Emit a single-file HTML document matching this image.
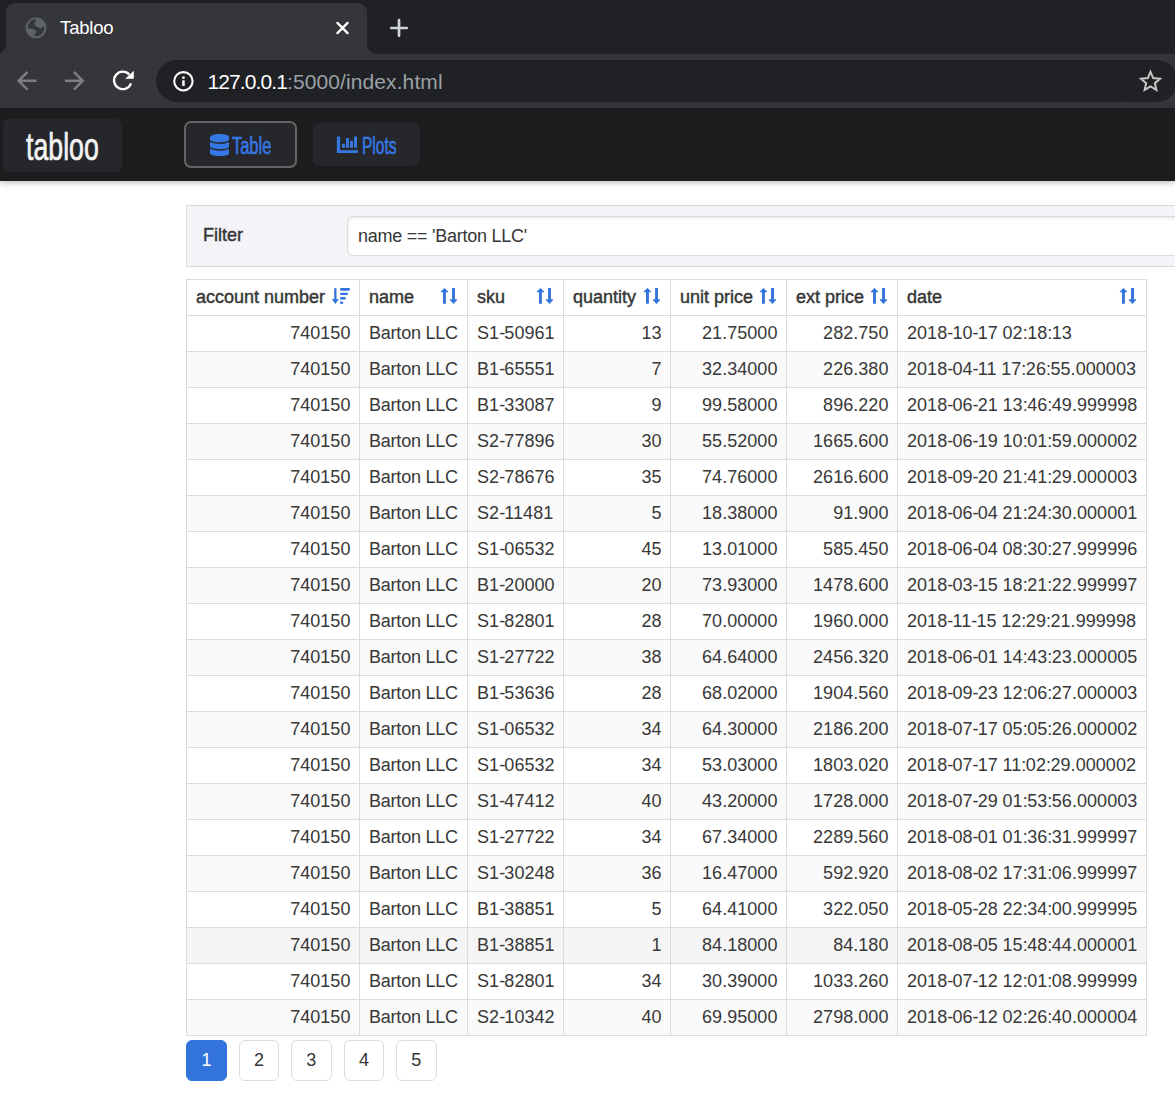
<!DOCTYPE html>
<html><head><meta charset="utf-8"><style>
*{margin:0;padding:0;box-sizing:border-box}
html,body{width:1175px;height:1100px;overflow:hidden;background:#fff;font-family:"Liberation Sans",sans-serif;position:relative}
.abs{position:absolute}
#tabstrip{left:0;top:0;width:1175px;height:54px;background:#202124}
#tab{left:6px;top:3px;width:361px;height:51px;background:#35363a;border-radius:9px 9px 0 0}
.flare{position:absolute;top:44px;width:10px;height:10px;background:#35363a}
.flare i{position:absolute;left:0;top:0;width:10px;height:10px;background:#202124}
#tabtitle{left:60.1px;top:16.5px;font-size:18.5px;letter-spacing:-0.2px;color:#fff;line-height:22px;white-space:nowrap}
#toolbar{left:0;top:54px;width:1175px;height:54px;background:#35363a}
#omni{left:156px;top:60px;width:1022px;height:41.5px;background:#202124;border-radius:21px}
#url{left:207.5px;top:70px;font-size:21px;line-height:24px;color:#fff;white-space:nowrap}
#url span{color:#9aa0a6}
#navbar{left:0;top:108px;width:1175px;height:73px;background:#1c1d1f;box-shadow:0 2px 6px rgba(0,0,0,.25)}
#logo{left:3px;top:119px;width:119px;height:53px;background:#25272b;border-radius:6px}
#logotxt{left:26px;top:125px;color:#f4f4f4;-webkit-text-stroke:0.7px #f4f4f4;font-size:39px;transform-origin:0 0;transform:scaleX(0.685);white-space:nowrap;line-height:44px}
#btn1{left:184.2px;top:121.1px;width:112.4px;height:46.5px;background:#25272b;border:2px solid #646464;border-radius:7px}
#btn2{left:313px;top:122.5px;width:107px;height:43.5px;background:#25272b;border-radius:7px}
.bt{color:#3578e5;-webkit-text-stroke:0.6px #3578e5;font-size:23px;line-height:28px;transform-origin:0 0;white-space:nowrap}
#filter{left:186px;top:205px;width:1000px;height:62px;background:#f4f3f8;border:1px solid #d9d9d9}
#flabel{left:203px;top:225px;font-size:18px;line-height:20px;color:#363636;-webkit-text-stroke:0.45px #363636}
#input{left:347px;top:216px;width:840px;height:40px;background:#fff;border:1px solid #dbdbdb;border-radius:6px;box-shadow:inset 0 1.25px 2.5px rgba(10,10,10,.1)}
#itext{left:358px;top:226px;font-size:18px;letter-spacing:-0.25px;line-height:20px;color:#363636}
table{position:absolute;left:186px;top:279px;border-collapse:collapse;table-layout:fixed;width:961px;font-size:18px;color:#383838}
td,th{border:1px solid #dbdbdb;height:36px;padding:0 8.5px 0 9px;white-space:nowrap;overflow:hidden;text-align:left;vertical-align:middle}
th{font-weight:normal;position:relative;-webkit-text-stroke:0.45px #363636}
td.r{text-align:right}
td{letter-spacing:0.05px}
td.nm{letter-spacing:-0.22px}
i{font-style:normal}
i.hy{letter-spacing:-0.8px}
i.co{letter-spacing:-0.5px}
i.sp{letter-spacing:-0.4px}
tr.e td{background:#fafafa}
tr.h td{background:#f5f5f5}
.si{position:absolute;right:9px;top:7.3px}
.si2{position:absolute;right:8px;top:7.3px}
.pg{position:absolute;top:1040px;width:40px;height:41px;border:1px solid #dbdbdb;border-radius:6px;background:#fff;font-size:18px;color:#363636;text-align:center;line-height:39px}
</style></head><body>
<div id="tabstrip" class="abs"></div>
<div id="tab" class="abs"></div>
<div class="flare" style="left:-4px"><i style="border-bottom-right-radius:10px"></i></div>
<div class="flare" style="left:367px"><i style="border-bottom-left-radius:10px"></i></div>
<svg class="abs" style="left:24px;top:16px" width="24" height="24" viewBox="-2 -2 24 24">
<defs><clipPath id="gc"><circle cx="10" cy="9.8" r="9.5"/></clipPath></defs>
<circle cx="10" cy="9.8" r="9.5" fill="none" stroke="#5f6368" stroke-width="2"/>
<g clip-path="url(#gc)" fill="#5f6368">
<path d="M10.8 0 C10.8 2 9.5 3 8.6 4.5 C7.8 6 8.5 7.8 10.5 8.6 C12 9.3 13.3 10.3 14.6 10.2 C16.3 10 17.5 8 20 7.2 L20 0 Z"/>
<path d="M0 10.3 C2 10.2 4.5 10.3 6.5 11 C8.5 11.7 10.2 12.5 10.3 13.8 C10.3 15 8.7 15.6 8.5 16.8 C8.4 18 9 19 9 20 L0 20 Z"/>
</g>
</svg>
<div id="tabtitle" class="abs">Tabloo</div>
<svg class="abs" style="left:334.6px;top:21px" width="15" height="14" viewBox="0 0 15 14"><path d="M2.4 1.9 L12.6 12.1 M12.6 1.9 L2.4 12.1" stroke="#fff" stroke-width="2.3" stroke-linecap="round"/></svg>
<svg class="abs" style="left:389px;top:18px" width="20" height="20" viewBox="0 0 20 20"><path d="M10 2.2 V17.8 M2.2 10 H17.8" stroke="#d0d3d7" stroke-width="2.7" stroke-linecap="round"/></svg>
<div id="toolbar" class="abs"></div>
<svg class="abs" style="left:12.1px;top:65.6px" width="29.4" height="29.4" viewBox="0 0 24 24"><path d="M20 11H7.83l5.59-5.59L12 4l-8 8 8 8 1.41-1.41L7.83 13H20v-2z" fill="#7c7e82"/></svg>
<svg class="abs" style="left:60.1px;top:65.6px" width="29.4" height="29.4" viewBox="0 0 24 24"><path d="M12 4l-1.41 1.41L16.17 11H4v2h12.17l-5.58 5.59L12 20l8-8z" fill="#7c7e82"/></svg>
<svg class="abs" style="left:111px;top:68px" width="26" height="25" viewBox="0 0 26 25"><path d="M20.02 15.39 A8.75 8.75 0 1 1 18.30 6.55" stroke="#fff" stroke-width="2.3" fill="none"/><path d="M14.2 10.8 L22.8 10.8 L22.8 2.8 Z" fill="#fff"/></svg>
<div id="omni" class="abs"></div>
<svg class="abs" style="left:172px;top:70px" width="23" height="23" viewBox="0 0 23 23"><circle cx="11.4" cy="11.3" r="9.2" fill="none" stroke="#fff" stroke-width="2.1"/><rect x="10.2" y="6.5" width="2.5" height="2.3" fill="#fff"/><rect x="10.2" y="10.3" width="2.5" height="5.6" fill="#fff"/></svg>
<div class="abs" style="left:1123px;top:64px;width:1px;height:34px;background:#1e1f22"></div>
<div id="url" class="abs"><b style="font-weight:normal;letter-spacing:-0.9px">127.0.0.1</b><span style="letter-spacing:0.1px">:5000/index.html</span></div>
<svg class="abs" style="left:1138px;top:68.8px" width="25" height="25" viewBox="0 0 25 25"><path d="M12.50 2.80 L15.20 9.08 L22.01 9.71 L16.87 14.22 L18.38 20.89 L12.50 17.40 L6.62 20.89 L8.13 14.22 L2.99 9.71 L9.80 9.08 Z" fill="none" stroke="#c6c6c6" stroke-width="2" stroke-linejoin="miter" stroke-miterlimit="10"/></svg>
<div id="navbar" class="abs"></div>
<div id="logo" class="abs"></div>
<div id="logotxt" class="abs">tabloo</div>
<div id="btn1" class="abs"></div>
<svg class="abs" style="left:209.8px;top:133.8px" width="19.4" height="22.2" viewBox="0 0 448 512"><path fill="#3578e5" d="M448 73.143v45.714C448 159.143 347.667 192 224 192S0 159.143 0 118.857V73.143C0 32.857 100.333 0 224 0s224 32.857 224 73.143zM448 176v102.857C448 319.143 347.667 352 224 352S0 319.143 0 278.857V176c48.125 33.143 136.208 48.572 224 48.572S399.874 209.143 448 176zm0 160v102.857C448 479.143 347.667 512 224 512S0 479.143 0 438.857V336c48.125 33.143 136.208 48.572 224 48.572S399.874 369.143 448 336z"/></svg>
<div class="abs bt" style="left:231.5px;top:132px;transform:scaleX(0.715)">Table</div>
<div id="btn2" class="abs"></div>
<svg class="abs" style="left:336px;top:136px" width="22" height="18" viewBox="0 0 22 18">
<path d="M0.85 0.4 H4.13 V14.26 H22 V17.09 H0.85 Z" fill="#3578e5"/>
<rect x="6" y="7.7" width="2.95" height="4.17" rx="0.3" fill="#3578e5"/>
<rect x="10.02" y="1.9" width="2.95" height="9.97" rx="0.3" fill="#3578e5"/>
<rect x="14.04" y="4.72" width="2.95" height="7.15" rx="0.3" fill="#3578e5"/>
<rect x="18.06" y="0.4" width="2.95" height="11.47" rx="0.3" fill="#3578e5"/>
</svg>
<div class="abs bt" style="left:362px;top:132px;transform:scaleX(0.675)">Plots</div>
<div id="filter" class="abs"></div>
<div id="flabel" class="abs">Filter</div>
<div id="input" class="abs"></div>
<div id="itext" class="abs">name == 'Barton LLC'</div>
<table>
<colgroup><col style="width:173px"><col style="width:108px"><col style="width:96px"><col style="width:107px"><col style="width:116px"><col style="width:111px"><col style="width:249px"></colgroup>
<thead><tr><th>account number<svg class="si2" width="20" height="18" viewBox="0 0 20 18"><path d="M3.2 2.2 A1.15 1.15 0 0 1 5.5 2.2 L5.5 12.1 L7.8 12.1 L4.35 16.9 L0.9 12.1 L3.2 12.1 Z" fill="#3273dc"/><g fill="#3273dc"><rect x="9" y="1.1" width="10" height="2.7" rx="1.3"/><rect x="9" y="5.8" width="8" height="2.3" rx="1.1"/><rect x="9" y="10.1" width="5.8" height="2.5" rx="1.2"/><rect x="9" y="14.6" width="3.2" height="2.3" rx="1.1"/></g></svg></th><th>name<svg class="si" width="18" height="18" viewBox="0 0 18 18"><path d="M4.46 0.93 L8.04 4.6 L8.04 5.3 L5.89 5.3 L5.89 16.8 L3.03 16.8 L3.03 5.3 L0.85 5.3 L0.85 4.6 Z M12.09 1.05 L14.95 1.05 L14.95 12.25 L17.09 12.25 L17.09 12.95 L13.5 16.9 L9.85 12.95 L9.85 12.25 L12.09 12.25 Z" fill="#3273dc"/></svg></th><th>sku<svg class="si" width="18" height="18" viewBox="0 0 18 18"><path d="M4.46 0.93 L8.04 4.6 L8.04 5.3 L5.89 5.3 L5.89 16.8 L3.03 16.8 L3.03 5.3 L0.85 5.3 L0.85 4.6 Z M12.09 1.05 L14.95 1.05 L14.95 12.25 L17.09 12.25 L17.09 12.95 L13.5 16.9 L9.85 12.95 L9.85 12.25 L12.09 12.25 Z" fill="#3273dc"/></svg></th><th>quantity<svg class="si" width="18" height="18" viewBox="0 0 18 18"><path d="M4.46 0.93 L8.04 4.6 L8.04 5.3 L5.89 5.3 L5.89 16.8 L3.03 16.8 L3.03 5.3 L0.85 5.3 L0.85 4.6 Z M12.09 1.05 L14.95 1.05 L14.95 12.25 L17.09 12.25 L17.09 12.95 L13.5 16.9 L9.85 12.95 L9.85 12.25 L12.09 12.25 Z" fill="#3273dc"/></svg></th><th>unit price<svg class="si" width="18" height="18" viewBox="0 0 18 18"><path d="M4.46 0.93 L8.04 4.6 L8.04 5.3 L5.89 5.3 L5.89 16.8 L3.03 16.8 L3.03 5.3 L0.85 5.3 L0.85 4.6 Z M12.09 1.05 L14.95 1.05 L14.95 12.25 L17.09 12.25 L17.09 12.95 L13.5 16.9 L9.85 12.95 L9.85 12.25 L12.09 12.25 Z" fill="#3273dc"/></svg></th><th>ext price<svg class="si" width="18" height="18" viewBox="0 0 18 18"><path d="M4.46 0.93 L8.04 4.6 L8.04 5.3 L5.89 5.3 L5.89 16.8 L3.03 16.8 L3.03 5.3 L0.85 5.3 L0.85 4.6 Z M12.09 1.05 L14.95 1.05 L14.95 12.25 L17.09 12.25 L17.09 12.95 L13.5 16.9 L9.85 12.95 L9.85 12.25 L12.09 12.25 Z" fill="#3273dc"/></svg></th><th>date<svg class="si" width="18" height="18" viewBox="0 0 18 18"><path d="M4.46 0.93 L8.04 4.6 L8.04 5.3 L5.89 5.3 L5.89 16.8 L3.03 16.8 L3.03 5.3 L0.85 5.3 L0.85 4.6 Z M12.09 1.05 L14.95 1.05 L14.95 12.25 L17.09 12.25 L17.09 12.95 L13.5 16.9 L9.85 12.95 L9.85 12.25 L12.09 12.25 Z" fill="#3273dc"/></svg></th></tr></thead>
<tbody>
<tr><td class="r">740150</td><td class="nm">Barton LLC</td><td>S1<i class="hy">-</i>50961</td><td class="r">13</td><td class="r">21.75000</td><td class="r">282.750</td><td>2018<i class="hy">-</i>10<i class="hy">-</i>17<i class="sp"> </i>02<i class="co">:</i>18<i class="co">:</i>13</td></tr>
<tr class="e"><td class="r">740150</td><td class="nm">Barton LLC</td><td>B1<i class="hy">-</i>65551</td><td class="r">7</td><td class="r">32.34000</td><td class="r">226.380</td><td>2018<i class="hy">-</i>04<i class="hy">-</i>11<i class="sp"> </i>17<i class="co">:</i>26<i class="co">:</i>55.000003</td></tr>
<tr><td class="r">740150</td><td class="nm">Barton LLC</td><td>B1<i class="hy">-</i>33087</td><td class="r">9</td><td class="r">99.58000</td><td class="r">896.220</td><td>2018<i class="hy">-</i>06<i class="hy">-</i>21<i class="sp"> </i>13<i class="co">:</i>46<i class="co">:</i>49.999998</td></tr>
<tr class="e"><td class="r">740150</td><td class="nm">Barton LLC</td><td>S2<i class="hy">-</i>77896</td><td class="r">30</td><td class="r">55.52000</td><td class="r">1665.600</td><td>2018<i class="hy">-</i>06<i class="hy">-</i>19<i class="sp"> </i>10<i class="co">:</i>01<i class="co">:</i>59.000002</td></tr>
<tr><td class="r">740150</td><td class="nm">Barton LLC</td><td>S2<i class="hy">-</i>78676</td><td class="r">35</td><td class="r">74.76000</td><td class="r">2616.600</td><td>2018<i class="hy">-</i>09<i class="hy">-</i>20<i class="sp"> </i>21<i class="co">:</i>41<i class="co">:</i>29.000003</td></tr>
<tr class="e"><td class="r">740150</td><td class="nm">Barton LLC</td><td>S2<i class="hy">-</i>11481</td><td class="r">5</td><td class="r">18.38000</td><td class="r">91.900</td><td>2018<i class="hy">-</i>06<i class="hy">-</i>04<i class="sp"> </i>21<i class="co">:</i>24<i class="co">:</i>30.000001</td></tr>
<tr><td class="r">740150</td><td class="nm">Barton LLC</td><td>S1<i class="hy">-</i>06532</td><td class="r">45</td><td class="r">13.01000</td><td class="r">585.450</td><td>2018<i class="hy">-</i>06<i class="hy">-</i>04<i class="sp"> </i>08<i class="co">:</i>30<i class="co">:</i>27.999996</td></tr>
<tr class="e"><td class="r">740150</td><td class="nm">Barton LLC</td><td>B1<i class="hy">-</i>20000</td><td class="r">20</td><td class="r">73.93000</td><td class="r">1478.600</td><td>2018<i class="hy">-</i>03<i class="hy">-</i>15<i class="sp"> </i>18<i class="co">:</i>21<i class="co">:</i>22.999997</td></tr>
<tr><td class="r">740150</td><td class="nm">Barton LLC</td><td>S1<i class="hy">-</i>82801</td><td class="r">28</td><td class="r">70.00000</td><td class="r">1960.000</td><td>2018<i class="hy">-</i>11<i class="hy">-</i>15<i class="sp"> </i>12<i class="co">:</i>29<i class="co">:</i>21.999998</td></tr>
<tr class="e"><td class="r">740150</td><td class="nm">Barton LLC</td><td>S1<i class="hy">-</i>27722</td><td class="r">38</td><td class="r">64.64000</td><td class="r">2456.320</td><td>2018<i class="hy">-</i>06<i class="hy">-</i>01<i class="sp"> </i>14<i class="co">:</i>43<i class="co">:</i>23.000005</td></tr>
<tr><td class="r">740150</td><td class="nm">Barton LLC</td><td>B1<i class="hy">-</i>53636</td><td class="r">28</td><td class="r">68.02000</td><td class="r">1904.560</td><td>2018<i class="hy">-</i>09<i class="hy">-</i>23<i class="sp"> </i>12<i class="co">:</i>06<i class="co">:</i>27.000003</td></tr>
<tr class="e"><td class="r">740150</td><td class="nm">Barton LLC</td><td>S1<i class="hy">-</i>06532</td><td class="r">34</td><td class="r">64.30000</td><td class="r">2186.200</td><td>2018<i class="hy">-</i>07<i class="hy">-</i>17<i class="sp"> </i>05<i class="co">:</i>05<i class="co">:</i>26.000002</td></tr>
<tr><td class="r">740150</td><td class="nm">Barton LLC</td><td>S1<i class="hy">-</i>06532</td><td class="r">34</td><td class="r">53.03000</td><td class="r">1803.020</td><td>2018<i class="hy">-</i>07<i class="hy">-</i>17<i class="sp"> </i>11<i class="co">:</i>02<i class="co">:</i>29.000002</td></tr>
<tr class="e"><td class="r">740150</td><td class="nm">Barton LLC</td><td>S1<i class="hy">-</i>47412</td><td class="r">40</td><td class="r">43.20000</td><td class="r">1728.000</td><td>2018<i class="hy">-</i>07<i class="hy">-</i>29<i class="sp"> </i>01<i class="co">:</i>53<i class="co">:</i>56.000003</td></tr>
<tr><td class="r">740150</td><td class="nm">Barton LLC</td><td>S1<i class="hy">-</i>27722</td><td class="r">34</td><td class="r">67.34000</td><td class="r">2289.560</td><td>2018<i class="hy">-</i>08<i class="hy">-</i>01<i class="sp"> </i>01<i class="co">:</i>36<i class="co">:</i>31.999997</td></tr>
<tr class="e"><td class="r">740150</td><td class="nm">Barton LLC</td><td>S1<i class="hy">-</i>30248</td><td class="r">36</td><td class="r">16.47000</td><td class="r">592.920</td><td>2018<i class="hy">-</i>08<i class="hy">-</i>02<i class="sp"> </i>17<i class="co">:</i>31<i class="co">:</i>06.999997</td></tr>
<tr><td class="r">740150</td><td class="nm">Barton LLC</td><td>B1<i class="hy">-</i>38851</td><td class="r">5</td><td class="r">64.41000</td><td class="r">322.050</td><td>2018<i class="hy">-</i>05<i class="hy">-</i>28<i class="sp"> </i>22<i class="co">:</i>34<i class="co">:</i>00.999995</td></tr>
<tr class="h"><td class="r">740150</td><td class="nm">Barton LLC</td><td>B1<i class="hy">-</i>38851</td><td class="r">1</td><td class="r">84.18000</td><td class="r">84.180</td><td>2018<i class="hy">-</i>08<i class="hy">-</i>05<i class="sp"> </i>15<i class="co">:</i>48<i class="co">:</i>44.000001</td></tr>
<tr><td class="r">740150</td><td class="nm">Barton LLC</td><td>S1<i class="hy">-</i>82801</td><td class="r">34</td><td class="r">30.39000</td><td class="r">1033.260</td><td>2018<i class="hy">-</i>07<i class="hy">-</i>12<i class="sp"> </i>12<i class="co">:</i>01<i class="co">:</i>08.999999</td></tr>
<tr class="e"><td class="r">740150</td><td class="nm">Barton LLC</td><td>S2<i class="hy">-</i>10342</td><td class="r">40</td><td class="r">69.95000</td><td class="r">2798.000</td><td>2018<i class="hy">-</i>06<i class="hy">-</i>12<i class="sp"> </i>02<i class="co">:</i>26<i class="co">:</i>40.000004</td></tr>
</tbody></table>
<div class="pg" style="left:186px;width:41px;background:#3273dc;border-color:#3273dc;color:#fff">1</div>
<div class="pg" style="left:239px">2</div>
<div class="pg" style="left:291px;width:40.5px">3</div>
<div class="pg" style="left:344px">4</div>
<div class="pg" style="left:396px;width:40.7px">5</div>
</body></html>
